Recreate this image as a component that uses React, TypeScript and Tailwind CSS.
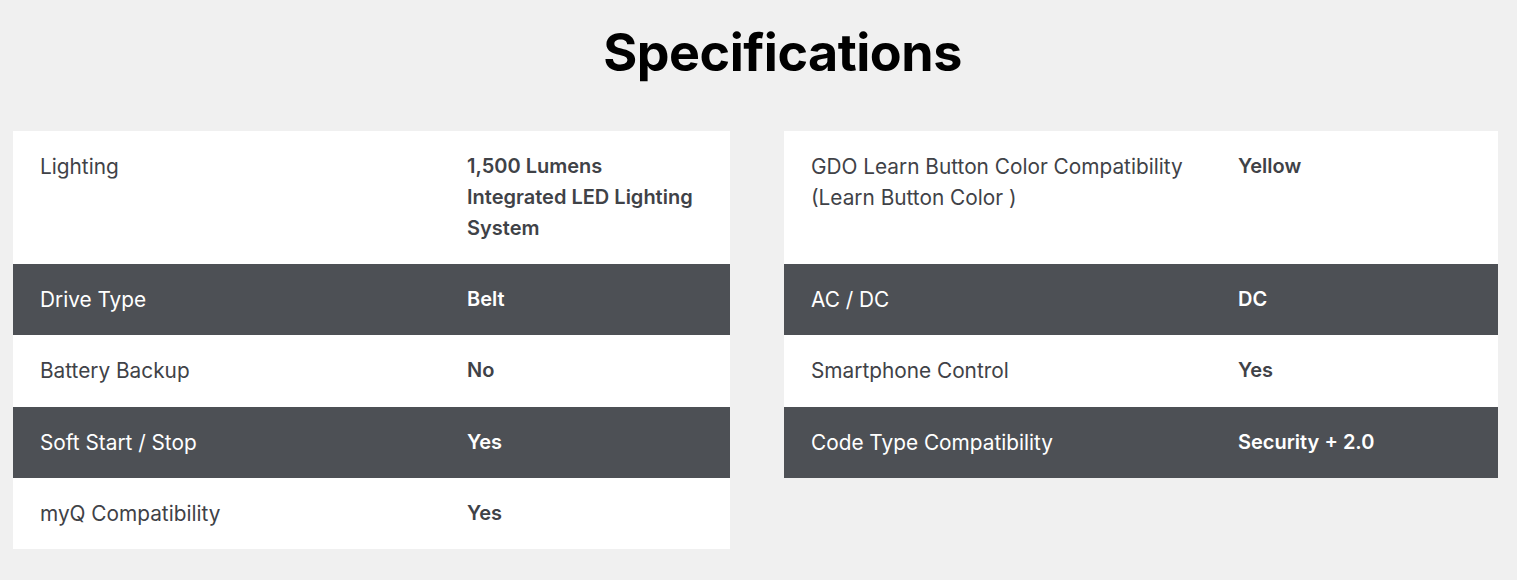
import React from 'react';

type Spec = { label: string; value: string };

const leftSpecs: Spec[] = [
  { label: 'Lighting', value: '1,500 Lumens Integrated LED Lighting System' },
  { label: 'Drive Type', value: 'Belt' },
  { label: 'Battery Backup', value: 'No' },
  { label: 'Soft Start / Stop', value: 'Yes' },
  { label: 'myQ Compatibility', value: 'Yes' },
];

const rightSpecs: Spec[] = [
  { label: 'GDO Learn Button Color Compatibility (Learn Button Color )', value: 'Yellow' },
  { label: 'AC / DC', value: 'DC' },
  { label: 'Smartphone Control', value: 'Yes' },
  { label: 'Code Type Compatibility', value: 'Security + 2.0' },
];

const SpecTable: React.FC<{ specs: Spec[] }> = ({ specs }) => (
  <div className="self-start">
    {specs.map((s, i) => {
      const dark = i % 2 === 1;
      return (
        <div
          key={s.label}
          className={
            (dark ? 'bg-[#4d5055] text-white' : 'bg-white text-[#3f4247]') +
            (i === 0 ? ' min-h-[133px]' : ' min-h-[71.25px]') +
            ' grid grid-cols-[454px_1fr] py-[20px] leading-[31px]'
          }
        >
          <div className="pl-[27px] pr-[40px] text-[20.8px]">{s.label}</div>
          <div className="pr-[27px] text-[20px] font-semibold">{s.value}</div>
        </div>
      );
    })}
  </div>
);

const App: React.FC = () => {
  return (
    <div className="min-h-[580px] bg-[#f0f0f0] font-['Inter',sans-serif]">
      <h1 className="text-center text-[52px] leading-[62px] font-bold text-black pt-[22px] pl-[48px] tracking-[-0.5px]">
        Specifications
      </h1>
      <div className="grid grid-cols-[717px_714px] gap-[54px] pl-[13px] pt-[47px]">
        <SpecTable specs={leftSpecs} />
        <SpecTable specs={rightSpecs} />
      </div>
    </div>
  );
};

export default App;
